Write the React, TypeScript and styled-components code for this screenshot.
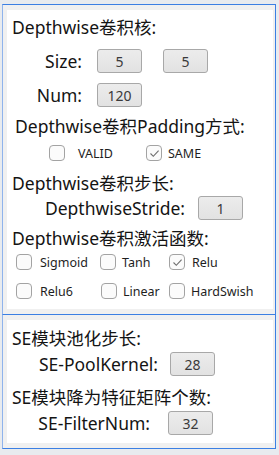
import React from "react";
import styled, { createGlobalStyle } from "styled-components";

const Global = createGlobalStyle`
  html, body { margin: 0; padding: 0; background: #e8ebef; }
  body { font-family: "Noto Sans", "Noto Sans CJK SC", sans-serif; color: #141414; }
`;

const Page = styled.div`
  width: 279px;
  height: 455px;
  background: #e8ebef;
  padding-top: 4px;
  box-sizing: border-box;
`;

const Frame = styled.div<{ $h: number; $bottom?: boolean }>`
  margin-left: 2px;
  width: 274px;
  height: ${(p) => p.$h}px;
  box-sizing: border-box;
  border-top: 1px solid #3b7fe3;
  border-left: 1px solid #8fb3ec;
  border-right: 1px solid #3b7fe3;
  ${(p) => (p.$bottom ? "border-bottom: 1px solid #3b7fe3;" : "")}
  background: #f0f0f0;
  padding: 5px 2px 5px 4px;
  display: flex;
`;

const Panel = styled.div<{ $pt: number }>`
  flex: 1;
  background: #ffffff;
  display: flex;
  flex-direction: column;
  padding-top: ${(p) => p.$pt}px;
  padding-left: 5px;
`;

const Title = styled.div<{ $mt: number; $ml?: number }>`
  height: 24px;
  line-height: 24px;
  font-size: 17.5px;
  margin-top: ${(p) => p.$mt}px;
  margin-left: ${(p) => p.$ml ?? 0}px;
  white-space: nowrap;
`;

const FieldRow = styled.div<{ $mt: number }>`
  display: flex;
  align-items: center;
  height: 24px;
  margin-top: ${(p) => p.$mt}px;
`;

const Label = styled.div<{ $w: number; $gap: number }>`
  width: ${(p) => p.$w}px;
  margin-right: ${(p) => p.$gap}px;
  text-align: right;
  font-size: 17.5px;
  white-space: nowrap;
`;

const ValueBox = styled.div<{ $ml?: number }>`
  width: 45px;
  height: 24px;
  box-sizing: border-box;
  margin-left: ${(p) => p.$ml ?? 0}px;
  border: 1px solid #a8a8a8;
  border-radius: 3px;
  background: linear-gradient(#ececec, #e2e2e2);
  display: flex;
  align-items: center;
  justify-content: center;
  font-size: 14px;
  color: #3a3a3a;
`;

const CheckRow = styled.div<{ $mt: number }>`
  display: flex;
  align-items: center;
  height: 16px;
  margin-top: ${(p) => p.$mt}px;
`;

const Cell = styled.div<{ $w: number }>`
  width: ${(p) => p.$w}px;
  flex: none;
  display: flex;
  align-items: center;
`;

const Box = styled.div`
  width: 16px;
  height: 16px;
  box-sizing: border-box;
  flex: none;
  border: 1px solid #a3a3a3;
  border-radius: 4px;
  background: #fbfbfb;
  display: flex;
  align-items: center;
  justify-content: center;
`;

const CheckLabel = styled.span<{ $gap: number; $fs: number }>`
  margin-left: ${(p) => p.$gap}px;
  font-size: ${(p) => p.$fs}px;
  white-space: nowrap;
  color: #1e1e1e;
`;

function Check({ checked, label, w, gap, fs }: { checked?: boolean; label: string; w: number; gap: number; fs: number }) {
  return (
    <Cell $w={w}>
      <Box>
        {checked && (
          <svg width="11" height="9" viewBox="0 0 11 9">
            <path d="M1.5 4.5 L4.3 7.3 L9.6 1.6" fill="none" stroke="#6e6e6e" strokeWidth="1.1" />
          </svg>
        )}
      </Box>
      <CheckLabel $gap={gap} $fs={fs}>{label}</CheckLabel>
    </Cell>
  );
}

const Spacer = styled.div<{ $w: number }>`
  width: ${(p) => p.$w}px;
  flex: none;
`;

export default function App() {
  return (
    <>
      <Global />
      <Page>
        <Frame $h={310}>
          <Panel $pt={5}>
            <Title $mt={0}>Depthwise卷积核:</Title>
            <FieldRow $mt={10}>
              <Label $w={70} $gap={15}>Size:</Label>
              <ValueBox>5</ValueBox>
              <ValueBox $ml={21}>5</ValueBox>
            </FieldRow>
            <FieldRow $mt={10}>
              <Label $w={70} $gap={15}>Num:</Label>
              <ValueBox>120</ValueBox>
            </FieldRow>
            <Title $mt={7} $ml={3}>Depthwise卷积Padding方式:</Title>
            <CheckRow $mt={7}>
              <Spacer $w={37} />
              <Check label="VALID" w={97} gap={13} fs={12.5} />
              <Check checked label="SAME" w={80} gap={6} fs={12.5} />
            </CheckRow>
            <Title $mt={10}>Depthwise卷积步长:</Title>
            <FieldRow $mt={1}>
              <Label $w={173} $gap={13}>DepthwiseStride:</Label>
              <ValueBox>1</ValueBox>
            </FieldRow>
            <Title $mt={6}>Depthwise卷积激活函数:</Title>
            <CheckRow $mt={4}>
              <Spacer $w={4} />
              <Check label="Sigmoid" w={84} gap={8} fs={12.5} />
              <Check label="Tanh" w={69} gap={6} fs={12.5} />
              <Check checked label="Relu" w={80} gap={7} fs={12.5} />
            </CheckRow>
            <CheckRow $mt={13}>
              <Spacer $w={4} />
              <Check label="Relu6" w={85} gap={8} fs={12.5} />
              <Check label="Linear" w={68} gap={6} fs={12.5} />
              <Check label="HardSwish" w={80} gap={6} fs={12.5} />
            </CheckRow>
          </Panel>
        </Frame>
        <Frame $h={135} $bottom>
          <Panel $pt={6}>
            <Title $mt={0}>SE模块池化步长:</Title>
            <FieldRow $mt={2}>
              <Label $w={146} $gap={12}>SE-PoolKernel:</Label>
              <ValueBox>28</ValueBox>
            </FieldRow>
            <Title $mt={9}>SE模块降为特征矩阵个数:</Title>
            <FieldRow $mt={2}>
              <Label $w={138} $gap={18}>SE-FilterNum:</Label>
              <ValueBox>32</ValueBox>
            </FieldRow>
          </Panel>
        </Frame>
      </Page>
    </>
  );
}
